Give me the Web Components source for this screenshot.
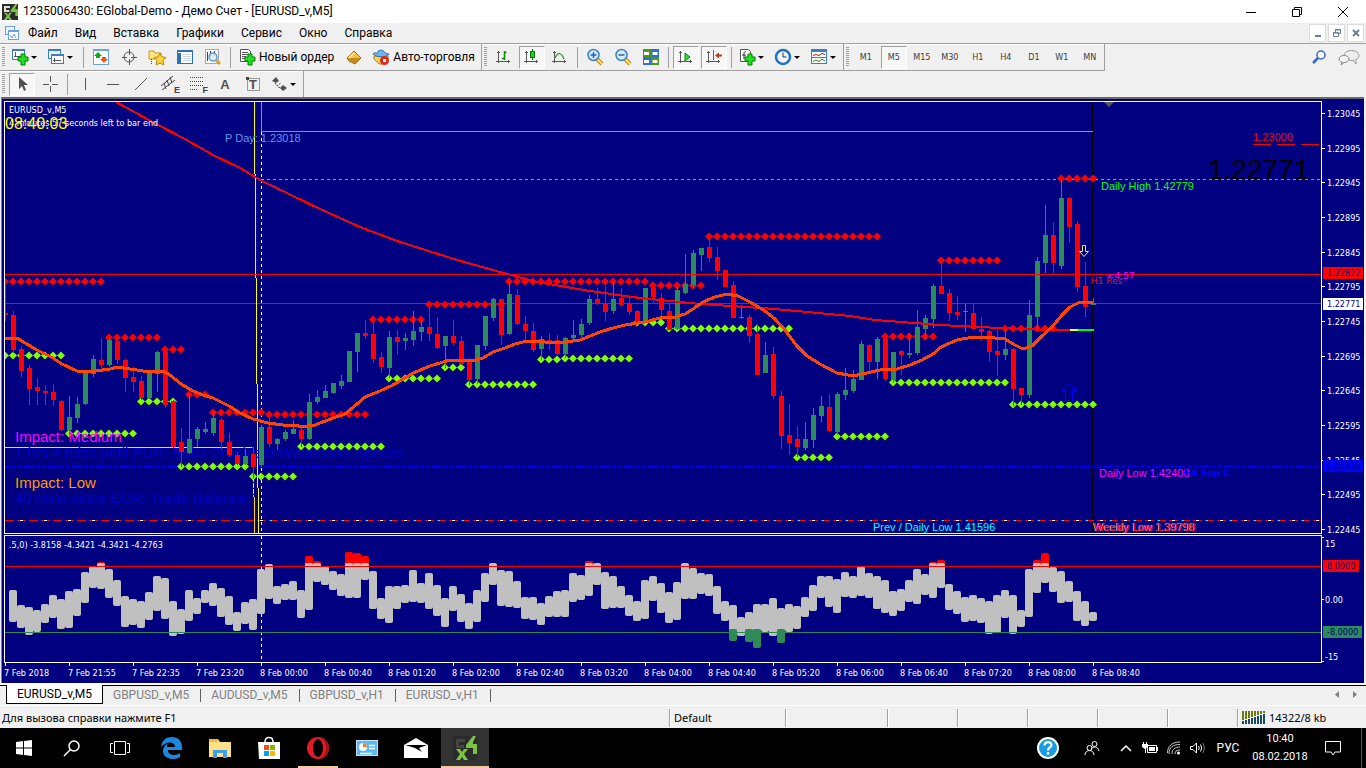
<!DOCTYPE html>
<html lang="ru">
<head>
<meta charset="utf-8">
<title>1235006430: EGlobal-Demo - Демо Счет - [EURUSD_v,M5]</title>
<style>
  html, body { margin: 0; height: 100%; }
  body { font-family: Roboto, "Noto Sans", sans-serif; font-size: 12px; color: #000; background: #f0f0f0; overflow: hidden; }
</style>
</head>
<body>
<trade-terminal></trade-terminal>

<script>
/* ---------- shared helpers ---------- */
const BUTTON_RESET = `
  :host, *, *::before, *::after { box-sizing: border-box; }
  button { appearance: none; border: 0; margin: 0; padding: 0; background: none; font: inherit; color: inherit; }
  svg { display: block; flex: none; }
`;
const define = (name, render) => customElements.define(name, class extends HTMLElement {
  connectedCallback() {
    if (this.shadowRoot) return;
    this.attachShadow({ mode: 'open' }).innerHTML = render(this);
  }
});
const svg = (w, h, body, extra = '') => `<svg width="${w}" height="${h}" viewBox="0 0 ${w} ${h}" aria-hidden="true" ${extra}>${body}</svg>`;

/* ---------- toolbar icons, 18x18 ---------- */
const AXES = '<path d="M3.5 3v12M1 13.5h14M2 4.5h3M13.500 12v3" stroke="#555" fill="none"/>';
const PLUS = '<path d="M10 6h4v3h3v4h-3v4h-4v-4H7V9h3z" fill="#1ee01e" stroke="#0a7a0a"/>';
const LENS = '<path d="M11 11l5 5" stroke="#b8860b" stroke-width="4"/><path d="M11 11l5 5" stroke="#ffe27a" stroke-width="2"/><circle cx="7.500" cy="7" r="5.500" fill="#d4ebff" stroke="#3a7fc4" stroke-width="1.500"/>';
const ICONS = {
  newchart: '<rect x="1.500" y="1.500" width="12" height="10" fill="#fff" stroke="#3a7fc4"/><path d="M1 2h13" stroke="#3a7fc4" stroke-width="2"/><path d="M4.500 4v5M3 8.500h7" stroke="#557" fill="none"/>' + PLUS,
  profiles: '<rect x="1.500" y="1.500" width="12" height="9" fill="#e8f2ff" stroke="#3a7fc4"/><path d="M1 2h13" stroke="#3a7fc4" stroke-width="2"/><rect x="4.500" y="6.500" width="12" height="9" fill="#fff" stroke="#3a7fc4"/><path d="M4 7h13" stroke="#3a7fc4" stroke-width="2"/><path d="M6 12.500h8M7.500 10v4" stroke="#557"/>',
  market: '<rect x="1.500" y="1.500" width="15" height="15" fill="#fff" stroke="#6ba5dc"/><path d="M1 2h16" stroke="#6ba5dc" stroke-width="2"/><path d="M6 4l4 4H8v2H4V8H2z" fill="#17a817"/><path d="M12 15l-4-4h2V9h4v2h2z" fill="#e8561a"/>',
  cross: '<circle cx="9" cy="9" r="5" fill="none" stroke="#555"/><path d="M9.500 1v6M9.500 11v6M2 9.500h5M11 9.500h6" stroke="#555"/>',
  folderstar: '<path d="M1 3h5l1 2h6v6H1z" fill="#ffe680" stroke="#c89b1a"/><path d="M3.500 11v5" stroke="#555" stroke-dasharray="1 1"/><path d="M12 5l2 4 4 .5-3 3 1 4.500-4-2-4 2 1-4.500-3-3L10 9z" fill="#ffd633" stroke="#b8860b"/>',
  navigator: '<rect x="1.500" y="2.500" width="15" height="13" fill="#fff" stroke="#2f6fb8"/><path d="M1 3h16" stroke="#2f6fb8" stroke-width="2"/><path d="M3.500 5v10" stroke="#2f6fb8" stroke-width="3"/><path d="M7 6.500h8M7 8.500h8M7 10.500h8M7 12.500h8" stroke="#c8d8ea"/>',
  tester: '<rect x="1.500" y="1.500" width="13" height="14" fill="#fff" stroke="#aaa"/><path d="M3.500 4v9M6.500 3v6M10.500 3v5" stroke="#444"/><path d="M12 12l4 4" stroke="#d9a520" stroke-width="3"/><circle cx="9" cy="9" r="4" fill="#cfe8ffcc" stroke="#5a9bd5" stroke-width="1.500"/>',
  order: '<path d="M2.500 1.500h8l2 2v10h-10z" fill="#fff" stroke="#555"/><path d="M4 4.500h6M4 6.500h7M4 8.500h4M4 10.500h3" stroke="#555"/>' + PLUS,
  book: '<path d="M2 10L9 3l7 7-6 6z" fill="#f3c14a" stroke="#a86f10"/><path d="M2 10l2 3 6 3 6-6" fill="#c78a1d" stroke="#a86f10"/><path d="M4 10l5-5" stroke="#ffe9a8" stroke-width="2"/>',
  auto: '<path d="M2 8h14v4l-4 4H7l-5-5z" fill="#ffd34d" stroke="#b8860b"/><path d="M5 6c0-5 7-5 8-1l4 1c0 3-14 4-16 0 1-2 3-1 4 0z" fill="#6db6ee" stroke="#3078b0"/><circle cx="12.500" cy="12.500" r="4.500" fill="#e02a1f"/><rect x="11" y="11" width="3" height="3" fill="#fff"/>',
  bars: AXES + '<path d="M9.500 3v9M9.500 4.500h2M7 10.500h2" stroke="#0a8a0a" stroke-width="1.500" fill="none"/>',
  candles: AXES + '<path d="M9.500 1v11" stroke="#0a7a0a"/><rect x="7.500" y="3.500" width="4" height="6" fill="#1fd01f" stroke="#0a7a0a"/>',
  line: AXES + '<path d="M4 10c3-6 6-6 9 1" stroke="#4a9a4a" stroke-width="1.500" fill="none"/>',
  zoomin: LENS + '<path d="M4.500 7h6M7.500 4v6" stroke="#1f66b0" stroke-width="1.500"/>',
  zoomout: LENS + '<path d="M4.500 7h6" stroke="#1f66b0" stroke-width="1.500"/>',
  tiles: '<rect x="1" y="1" width="8" height="8" fill="#4c9a1c"/><rect x="9" y="1" width="8" height="8" fill="#2f6fd0"/><rect x="1" y="9" width="8" height="8" fill="#2f6fd0"/><rect x="9" y="9" width="8" height="8" fill="#4c9a1c"/><path d="M2 5.500h5M10.500 5.500h5M2 13.500h5M10.500 13.500h5" stroke="#fff" stroke-width="3"/>',
  shift: AXES + '<path d="M8 5l5 4-5 4z" fill="#36d836" stroke="#0a8a0a"/>',
  scroll: AXES + '<path d="M8.500 2v10" stroke="#2a6db0"/><path d="M10 7.500l4-3v2h3v2h-3v2z" fill="#c0391b"/>',
  indicators: '<path d="M2.500 1.500h8l2 2v10h-10z" fill="#fff" stroke="#555"/><path d="M8 4c-2-1-2 1-2 3v4M4 7h4" stroke="#333" fill="none"/>' + PLUS,
  clock: '<circle cx="9" cy="9" r="7" fill="#eef6ff" stroke="#2470c0" stroke-width="2.500"/><path d="M9 4.500V9h3.500" stroke="#334" fill="none"/>',
  template: '<rect x="1.500" y="1.500" width="15" height="14" fill="#fff" stroke="#3a7fc4"/><path d="M1 9.500h16" stroke="#3a7fc4"/><path d="M1 2.500h16" stroke="#3a7fc4" stroke-width="3"/><path d="M3 7.500l3-1 3 1 3-2 3 1" stroke="#8a2a1a" fill="none"/><path d="M3 13.500l3-1.500 3 1.500 3-2.500 3 2" stroke="#2a8a2a" fill="none"/>',
  cursor: '<path d="M6 2v12l3-3 2 5 2-1-2-5h4z" fill="#505050"/>',
  crosshair: '<path d="M9.500 1v6M9.500 11v6M2 9.500h6M11 9.500h6" stroke="#555"/>',
  vline: '<path d="M9.500 3v12" stroke="#555"/>',
  hline: '<path d="M3 9.500h12" stroke="#555"/>',
  trend: '<path d="M3 15L15 3" stroke="#555"/>',
  channel: '<path d="M1 11L13 1M2 15L15 5M4 8l2 6M7 5l2 6M10 2l2 6" stroke="#444"/>',
  fibo: '<path d="M2 2.500h14M2 6.500h14M2 10.500h14M2 14.500h8" stroke="#444" stroke-dasharray="1 1"/>',
  label: '<rect x="3.500" y="3.500" width="12" height="12" fill="none" stroke="#444" stroke-dasharray="1 1"/><rect x="2" y="2" width="3" height="3" fill="#444"/>',
  arrows: '<path d="M2 6l4-4 3 4-3 2zM10 13l3 3 4-3-4-3z" fill="#505050"/><path d="M5 8l2 3 4-3M8 12l3 1" fill="none" stroke="#505050" stroke-dasharray="2 1"/>',
  find: '<circle cx="11" cy="6" r="4" fill="#fff" stroke="#3465d6" stroke-width="1.500"/><path d="M8 9l-5 5" stroke="#3465d6" stroke-width="2.500"/>',
  chat: '<ellipse cx="13.500" cy="6.500" rx="7.500" ry="5" fill="#eee" stroke="#999"/><path d="M15 11l3 4v-5" fill="#eee" stroke="#999"/><ellipse cx="6" cy="10" rx="5" ry="3.500" fill="#f6f6f6" stroke="#888"/><path d="M4 13l-1 3 3-2.500" fill="#f6f6f6" stroke="#888"/>'
};
const icon = (name, w = 18) => svg(w, 18, ICONS[name]);

const APP_LOGO = (s) => `<svg width="${s}" height="${s}" viewBox="0 0 24 24" aria-hidden="true"><rect width="24" height="24" fill="#2b2b2b"/><path d="M3 3h9v3H6v3h5v3H3z" fill="var(--logo-f,#444)"/><path d="M20 0l-7 9v3h7v6h4V8h-4V6l3-6z" fill="#7cc242"/><path d="M3 13h4l2 3 2-3h4l-4 5 4 6h-4l-2-3-2 3H3l4-6z" fill="#7cc242"/></svg>`;

/* ---------- title bar ---------- */
define('title-bar', () => `<style>${BUTTON_RESET}
  :host { display: flex; align-items: center; height: 23px; background: #fff; padding-left: 2px; gap: 4px; --logo-f: #ddd; }
  h1 { margin: 0; font-size: 12px; font-weight: 400; line-height: 23px; flex: 1; white-space: nowrap; padding-left: 1px; }
  .win { display: flex; }
  button { width: 46px; height: 21px; display: grid; place-items: center; }
</style>
${APP_LOGO(16)}<h1><slot></slot></h1>
<div class="win">
  <button aria-label="Свернуть">${svg(12, 12, '<path d="M1 6.500h10" stroke="#000"/>')}</button>
  <button aria-label="Развернуть">${svg(12, 12, '<path d="M1.500 3.500h7v7h-7zM3.500 3.500v-2h7v7h-2" stroke="#000" fill="none"/>')}</button>
  <button aria-label="Закрыть">${svg(12, 12, '<path d="M1 1l10 10M11 1L1 11" stroke="#000"/>')}</button>
</div>`);

/* ---------- menu bar ---------- */
define('menu-bar', () => `<style>${BUTTON_RESET}
  :host { display: flex; align-items: center; height: 21px; background: #f0f0f0; border-bottom: 1px solid #a0a0a0; padding: 0 2px 0 5px; }
  nav { display: flex; flex: 1; gap: 17px; padding-left: 9px; }
  nav button { line-height: 20px; }
  .mdi { display: flex; gap: 2px; }
  .mdi button { width: 17px; height: 18px; background: #fff; border: 1px solid #dcdcdc; display: grid; place-items: center; }
</style>
${svg(14, 14, '<rect x=".5" y=".5" width="9" height="8" fill="#eaf3ff" stroke="#6aa0e0"/><rect x="3.500" y="4.500" width="10" height="9" fill="#fff" stroke="#6aa0e0"/><path d="M3 5h11" stroke="#6aa0e0" stroke-width="2"/><path d="M5 9l2 3 2-4 2 4" stroke="#6aa0e0" fill="none"/>')}
<nav>${['Файл', 'Вид', 'Вставка', 'Графики', 'Сервис', 'Окно', 'Справка'].map(t => `<button>${t}</button>`).join('')}</nav>
<div class="mdi">
  <button aria-label="Свернуть окно">${svg(10, 10, '<path d="M2 8h6" stroke="#6b7f93" stroke-width="2"/>')}</button>
  <button aria-label="Восстановить окно">${svg(10, 10, '<path d="M1.500 4.500h5v4h-5zM3.500 4V1.500h5v4H7" stroke="#6b7f93" fill="none"/><path d="M1 5h6M3 2h6" stroke="#6b7f93"/>')}</button>
  <button aria-label="Закрыть окно">${svg(10, 10, '<path d="M2 2l6 6M8 2L2 8" stroke="#6b7f93" stroke-width="2"/>')}</button>
</div>`);

/* ---------- toolbar pieces ---------- */
define('tool-bar', () => `<style>
  :host { box-sizing: border-box; display: flex; align-items: center; height: 27px; border-right: 1px solid #a0a0a0; border-bottom: 1px solid #a0a0a0; box-shadow: inset 0 1px #fff; }
  :host([flat]) { border-bottom: 0; }
  .grip { width: 3px; height: 20px; margin: 0 3px 0 2px; background: repeating-linear-gradient(#a0a0a0 0 1px, #f0f0f0 1px 2px); }
</style><div class="grip"></div><slot></slot>`);

define('tool-sep', () => `<style>
  :host { display: block; width: 1px; height: 21px; background: #a0a0a0; margin: 0 3px; }
</style>`);

define('tool-button', el => {
  const name = el.getAttribute('icon'), text = el.getAttribute('text') || '', glyph = el.getAttribute('glyph') || '';
  return `<style>${BUTTON_RESET}
  :host { display: block; width: 28px; }
  :host([menu]) { width: 36px; }
  :host([text]) { width: auto; }
  button { display: flex; align-items: center; justify-content: center; width: 100%; height: 23px; position: relative; white-space: nowrap; }
  :host([menu]) button { justify-content: flex-start; padding-left: 3px; gap: 2px; }
  :host([text]) button { padding: 0 6px 0 4px; gap: 3px; }
  :host([pressed]) button { width: 26px; margin: 0 1px; border: 1px solid; border-color: #a0a0a0 #fff #fff #a0a0a0; background: #f7f7f7; }
  .tf { font: 9px "DejaVu Sans Condensed", "DejaVu Sans", sans-serif; color: #3c3c3c; }
  .glyph { position: absolute; font: bold 9px "Liberation Sans", sans-serif; color: #444; right: 3px; bottom: 1px; line-height: 9px; }
  .glyph.big { inset: 0; line-height: 23px; font-size: 13px; text-align: center; color: #505050; }
</style>
<button aria-label="${el.getAttribute('label') || text}">
  ${name ? icon(name) : ''}${text ? `<span>${text}</span>` : ''}${el.hasAttribute('tf') ? `<span class="tf">${el.getAttribute('tf')}</span>` : ''}
  ${glyph ? `<span class="glyph ${el.hasAttribute('big') ? 'big' : ''}">${glyph}</span>` : ''}
  ${el.hasAttribute('menu') ? svg(6, 3, '<path d="M0 0h6L3 3z" fill="#000"/>') : ''}
</button>`;
});

define('tool-area', () => `<style>${BUTTON_RESET}
  :host { display: block; background: #f0f0f0; }
  .row { display: flex; height: 27px; }
  .row + .row { height: 26px; }
  .row + .row tool-bar { height: 26px; }
  .tools { margin-left: auto; display: flex; align-items: center; gap: 10px; padding-right: 6px; }
</style>
<div class="row">
  <tool-bar>
    <tool-button menu icon="newchart" label="Новый график"></tool-button>
    <tool-button menu icon="profiles" label="Профили"></tool-button>
    <tool-sep></tool-sep>
    <tool-button icon="market" label="Обзор рынка"></tool-button>
    <tool-button icon="cross" label="Окно данных"></tool-button>
    <tool-button icon="folderstar" label="Навигатор"></tool-button>
    <tool-button icon="navigator" label="Терминал"></tool-button>
    <tool-button icon="tester" label="Тестер стратегий"></tool-button>
    <tool-sep></tool-sep>
    <tool-button icon="order" text="Новый ордер"></tool-button>
    <tool-button icon="book" label="MetaEditor"></tool-button>
    <tool-button icon="auto" text="Авто-торговля"></tool-button>
  </tool-bar>
  <tool-bar>
    <tool-button icon="bars" label="Бары"></tool-button>
    <tool-button icon="candles" pressed label="Свечи"></tool-button>
    <tool-button icon="line" label="Линия"></tool-button>
    <tool-sep></tool-sep>
    <tool-button icon="zoomin" label="Увеличить"></tool-button>
    <tool-button icon="zoomout" label="Уменьшить"></tool-button>
    <tool-button icon="tiles" label="Окна мозаикой"></tool-button>
    <tool-sep></tool-sep>
    <tool-button icon="shift" pressed label="Автопрокрутка"></tool-button>
    <tool-button icon="scroll" pressed label="Сдвиг графика"></tool-button>
    <tool-sep></tool-sep>
    <tool-button menu icon="indicators" label="Индикаторы"></tool-button>
    <tool-button menu icon="clock" label="Периоды"></tool-button>
    <tool-button menu icon="template" label="Шаблоны"></tool-button>
  </tool-bar>
  <tool-bar>
    ${['M1', 'M5', 'M15', 'M30', 'H1', 'H4', 'D1', 'W1', 'MN'].map(t => `<tool-button tf="${t}" label="${t}" ${t === 'M5' ? 'pressed' : ''}></tool-button>`).join('')}
  </tool-bar>
  <div class="tools">
    <button aria-label="Поиск">${icon('find')}</button>
    <button aria-label="Чат">${icon('chat', 22)}</button>
  </div>
</div>
<div class="row">
  <tool-bar flat>
    <tool-button icon="cursor" pressed label="Курсор"></tool-button>
    <tool-button icon="crosshair" label="Перекрестие"></tool-button>
    <tool-sep></tool-sep>
    <tool-button icon="vline" label="Вертикальная линия"></tool-button>
    <tool-button icon="hline" label="Горизонтальная линия"></tool-button>
    <tool-button icon="trend" label="Трендовая линия"></tool-button>
    <tool-button icon="channel" glyph="E" label="Канал"></tool-button>
    <tool-button icon="fibo" glyph="F" label="Фибоначчи"></tool-button>
    <tool-button glyph="A" big label="Текст"></tool-button>
    <tool-button icon="label" glyph="T" big label="Метка"></tool-button>
    <tool-button menu icon="arrows" label="Стрелки"></tool-button>
  </tool-bar>
</div>`);

/* ---------- chart data ---------- */
/* One candle every 8px, first at x=5: direction, high, low, body top, body bottom. */
const CANDLES = `R283,321,313,315 R311,353,315,350 R346,377,349,371 R365,405,368,389 R378,405,387,391 R385,405,391,393 R384,406,392,400 R400,431,401,430 G396,435,417,430 G397,423,404,418 G370,405,373,404 G355,377,359,374 R338,368,360,365 G338,367,340,365 R338,364,341,360 R359,392,360,378 R367,392,377,382 R376,400,381,398 G371,399,372,398 G351,392,352,374 R350,408,352,405 R400,448,401,447 R428,467,442,452 G394,454,439,453 G427,447,429,439 G422,434,429,432 G411,436,418,433 R418,450,420,442 R433,457,442,455 R452,465,455,464 G449,465,456,464 R448,478,454,467 G425,467,427,465 R416,447,427,444 G438,450,439,444 G430,441,432,439 G420,434,429,434 R428,447,430,439 G394,440,402,439 G390,404,397,402 G385,398,391,398 G383,394,383,393 G375,389,381,386 G351,382,351,382 G333,372,333,352 R320,339,333,336 R319,363,334,359 R352,373,357,367 G331,378,337,368 R330,355,337,342 G333,350,338,341 G311,346,331,340 G320,341,327,332 R305,341,327,334 R317,349,334,348 G336,368,336,346 R320,346,336,343 R336,365,341,364 R358,385,360,380 G345,384,345,379 G316,350,316,346 G298,321,299,318 R299,345,299,335 G281,335,294,334 R289,325,295,324 R316,343,324,331 R323,352,331,350 G336,360,339,349 R333,350,340,342 R335,355,340,354 G337,358,338,354 G320,341,335,338 G319,337,324,335 G295,325,299,323 R288,305,299,303 R286,321,303,312 G282,314,299,311 R288,307,298,305 R297,315,304,312 R310,324,311,322 G288,323,288,322 R286,303,288,297 R293,317,298,310 R303,330,311,330 G286,330,290,329 G254,294,284,293 G250,287,253,285 G248,271,248,255 R238,262,247,258 R247,280,257,271 R270,287,270,287 R281,318,285,318 G305,319,317,318 R315,343,317,336 R324,375,334,375 G342,373,355,373 R347,399,354,396 R391,449,396,436 R404,455,435,443 R426,457,439,447 G422,450,439,448 G408,448,415,440 G396,422,406,416 R394,432,407,431 G392,435,394,432 G368,400,390,395 G370,393,379,391 G341,380,344,380 R344,373,345,362 G337,379,339,362 R336,381,339,379 G352,383,352,380 R350,375,351,355 G333,358,353,355 G310,355,327,353 G315,339,318,329 G284,328,286,319 R262,294,286,294 R289,321,293,313 R296,320,312,315 G304,332,311,312 R304,329,313,329 R317,341,329,332 R330,362,331,352 R330,376,351,355 G329,360,349,355 R348,406,349,389 R388,405,388,395 G300,398,315,395 G257,330,261,317 G205,273,235,263 R222,273,235,263 G180,269,198,266 R197,243,198,227 R221,292,224,287 R262,317,286,307 G298,305,303,305`.split(' ');

/* Fractal rows: y, first x, last x, 8px step. */
const RED_ROWS = [[281,5,101],[337,109,157],[349,165,181],[394,189,205],[412,213,261],[414,269,365],[319,373,421],[304,429,501],[281,509,645],[285,653,701],[236,709,877],[336,885,933],[260,941,997],[328,1005,1053],[178,1061,1093]];
const LIME_ROWS = [[355,5,61],[433,69,133],[401,141,173],[466,181,245],[476,253,293],[446,301,381],[378,389,437],[367,445,461],[384,469,533],[359,541,557],[358,565,629],[322,637,661],[328,669,789],[457,797,829],[436,837,885],[382,893,1005],[404,1013,1093]];

const SLOW_MA = '116,102 158,125 183,138 213,155 240,168 262,181 320,209 360,227 400,242 457,260 500,272 537,282 590,291 640,298 700,304 775,309 850,316 875,320 940,325 1000,328 1048,330 1070,330';
const FAST_MA = '5,338 17,338 25,343 37,350 53,358 62,364 77,371 88,372 110,369 117,367 130,369 150,372 163,371 170,375 181,384 193,391 203,395 213,398 229,406 240,413 253,419 268,423 283,425 295,425 302,427 315,425 333,418 345,414 357,404 365,397 380,391 391,386 400,381 413,373 430,366 450,360 475,360 483,358 493,352 505,348 515,344 527,341 545,342 565,342 580,340 590,336 600,332 613,328 625,325 645,322 660,318 675,317 685,314 693,309 703,302 715,297 727,294 738,296 750,302 765,311 775,319 785,330 797,346 807,356 820,364 837,373 853,376 867,373 880,370 897,369 910,365 922,360 933,354 941,347 957,340 973,337 985,337 1005,339 1015,345 1023,349 1032,346 1041,337 1052,327 1062,315 1070,307 1080,302 1093,302';

/* Oscillator: top, bottom of each column from x=13; r = overbought cap top, g = oversold foot bottom. */
const OSC = `590,622 605,628 607,635 610,632 604,623 595,618 599,629 591,628 589,616 572,603 566,588 563,589,r562 569,598 580,606 596,627 599,625 601,628 592,620 576,611 578,619 601,636 609,634 590,621 598,614 590,603 583,606 588,617 596,625 612,631 602,624 599,630 569,614 564,599 586,604 584,600 581,600 590,618 563,610,r556 563,582,r561 566,585 571,590 574,596 563,598,r552 563,598,r553 563,580,r556 571,609 598,619 586,623 586,609 585,603 570,602 583,603 573,609 585,616 598,627 586,611 594,622 603,629 590,622 573,602 563,585 570,606 571,607 581,608 597,619 597,620 603,625 596,617 591,617 590,617 573,602 575,600 563,596,r561 563,585 572,609 576,608 586,608 595,616 601,621 580,619 576,601 583,613 592,623 582,620 563,599 568,599 573,594 574,596 586,614 601,621 605,631,g641 617,636 612,631,g642 604,631,g648 604,632 598,636 608,631,g643 604,632 606,629 597,617 585,611 576,598 576,607 579,613 572,597 576,598 566,596 573,598 576,609 580,613 591,616 589,611 580,602 569,604 574,595 563,598,r562 563,588,r560 584,610 591,614 597,622 595,621 598,623 601,634 595,633 590,618 595,634 610,627 569,617 563,593,r560 563,583,r553 567,592 571,603 581,602 591,621 601,626 612,621`.split(' ');

const rect = (x, y, w, h, f) => `<rect x="${x}" y="${y}" width="${w}" height="${h}" fill="${f}"/>`;
const dash = (x1, y1, x2, y2, c, d) => `<path d="M${x1} ${y1}L${x2} ${y2}" stroke="${c}" stroke-dasharray="${d}" fill="none"/>`;
const text = (x, y, cls, fill, s) => `<text x="${x}" y="${y}" class="${cls}" fill="${fill}">${s.replace('<', '&lt;')}</text>`;
const WIDE = 4000;

const candles = CANDLES.map((c, n) => {
  const [h, l, t, b] = c.slice(1).split(',').map(Number), x = 5 + 8 * n, f = c[0] === 'R' ? '#f00' : '#2e8b57';
  return rect(x, h, 1, l - h, f) + rect(x - 2, t, 5, Math.max(b - t, 1), f);
}).join('');
const diamonds = (rows, fill) => rows.map(([y, a, b]) => {
  let s = '';
  for (let x = a; x <= b; x += 8) s += `M${x - 4} ${y + .5}l4 -4 4 4 -4 4z`;
  return `<path d="${s}" fill="${fill}"/>`;
}).join('');
const osc = OSC.map((o, n) => {
  const [t, b, m] = o.split(','), x = 9 + 8 * n;
  const col = (y1, y2, f) => `<rect x="${x}" y="${y1}" width="8" height="${y2 - y1}" rx="2" fill="${f}"/>`;
  let s = '';
  if (m && m[0] === 'r') s += col(+m.slice(1), 575, '#f00');
  s += col(+t, +b, '#c0c0c0');
  if (m && m[0] === 'g') s += col(629, +m.slice(1), '#2e8b57');
  return s;
}).join('');

define('chart-pane', el => {
  const main = el.getAttribute('kind') === 'price';
  const body = main ? `
    ${rect(0, 303, WIDE, 1, '#484858')}${rect(1092, 90, 1, 900, '#000')}
    ${dash(0, 466.5, WIDE, 466.5, '#00f', '9 3 3 3 3 3')}
    ${dash(5, 520.5, WIDE, 520.5, '#f00', '9 3')}${dash(20, 520.5, WIDE, 520.5, '#fff', '3 21')}${dash(270, 520.5, WIDE, 520.5, '#0ff', '2 22')}
    ${dash(261, 179.5, WIDE, 179.5, '#0f0', '3 3')}
    ${rect(261, 90, 1, 42, '#6495ed')}${rect(261, 131, 832, 1, '#6495ed')}
    ${dash(261.5, 132, 261.5, 900, '#fff', '3 3')}
    ${rect(5, 447, 249, 1, '#ffe23c')}${dash(253.5, 447, 253.5, 497, '#ffe23c', '5 1')}${rect(254, 497, 1, 400, '#ffd700')}
    ${rect(254, 90, 1, 84, '#ff0')}${rect(255, 174, 1, 104, '#ff0')}${rect(256, 278, 1, 106, '#ff0')}${rect(257, 384, 1, 104, '#ff0')}${rect(258, 488, 1, 400, '#ff0')}
    ${text(15, 458, 'news', '#0000c0', '1 hrs 4 mins until EUR: Buba President Weidmann Speaks')}
    ${text(15, 503, 'news', '#0000c0', '40 mins since EUR: Trade Balance')}
    ${diamonds(RED_ROWS, '#f00')}${diamonds(LIME_ROWS, '#7fff00')}
    ${candles}
    ${rect(0, 274, WIDE, 1, '#f00')}
    <polyline points="${SLOW_MA}" fill="none" stroke="#f00" stroke-width="2"/>
    ${rect(1070, 329, 8, 2, '#ff0')}${rect(1078, 329, 16, 2, '#0f0')}
    <polyline points="${FAST_MA}" fill="none" stroke="#ff4500" stroke-width="3"/>
    <path d="M1104 102h10l-5 5z" fill="#585858"/>
    <path d="M1082.500 245.500h3v6h3l-4.500 5-4.500-5h3z" fill="none" stroke="#f0e68c"/>
    <path d="M1065.500 401.500v-11h-4l7.500-7 7.500 7h-4v11z" fill="none" stroke="#00f"/>
    ${dash(1253, 144.5, 1319, 144.5, '#f00', '18 6')}
    ${text(1253, 141, 'lab', '#f00', '1.23000')}
    ${text(1208, 179, 'big', '#000', '1.22771')}
    ${text(225, 142, 'lab', '#6495ed', 'P Day: 1.23018')}
    ${text(1101, 190, 'lab', '#0f0', 'Daily High 1.42779')}
    ${text(1107, 279, 'ver', '#f0f', '<4:57')}
    ${text(1091, 284, 'ver', '#dc143c', 'H1 Res')}
    ${text(1099, 477, 'lab', '#f0f', 'Daily Low 1.42408')}
    ${text(1184, 476, 'verB', '#00f', 'H4 Sup C')}
    ${text(873, 531, 'lab', '#0ff', 'Prev / Daily Low 1.41596')}
    ${text(1093, 531, 'lab', '#ffc0cb', 'Weekly Low 1.39798')}
    ${text(1094, 531, 'lab', '#f00', 'Weekly Low 1.39798')}
    ${text(15, 442, 'news', '#f0f', 'Impact: Medium')}
    ${text(15, 488, 'news', '#f90', 'Impact: Low')}
    ${text(9, 113, 'tah', '#fff', 'EURUSD_v,M5')}
    ${text(9, 126, 'tah', '#fff', '4 minutes 57 seconds left to bar end')}
    ${text(5, 129, 'clk', '#ff0', '08:40:03')}`
  : `${dash(261.5, 536, 261.5, 900, '#fff', '3 3')}${osc}
    ${rect(0, 566, WIDE, 1, '#f00')}${rect(0, 632, WIDE, 1, '#2e8b57')}
    ${text(9, 548, 'tah', '#fff', '.5,0) -3.8158 -4.3421 -4.3421 -4.2763')}`;
  return `<style>
  :host { display: block; min-height: 0; min-width: 0; border: 1px solid #fff; overflow: hidden; }
  svg { display: block; width: 100%; height: 100%; }
  polyline { shape-rendering: crispEdges; }
  text { white-space: pre; }
  .tah { font: 9px "DejaVu Sans Condensed", "DejaVu Sans", sans-serif; }
  .lab { font: 11px "Liberation Sans", sans-serif; }
  .news { font: 15px "Liberation Sans", sans-serif; }
  .clk { font: 16px "Liberation Sans", sans-serif; }
  .big { font: 28px "Liberation Sans", sans-serif; }
  .ver { font: 9px "DejaVu Sans", sans-serif; }
  .verB { font: bold 9px "DejaVu Sans", sans-serif; }
</style><svg role="img" aria-label="${main ? 'EURUSD_v,M5' : 'Oscillator'}"><g transform="translate(-5 ${main ? -102 : -536})">${body}</g></svg>`;
});

define('chart-scale', el => {
  const main = el.getAttribute('kind') === 'price';
  const label = (y, s) => rect(0, y, 3, 1, '#fff') + text(5, y + 4, 't', '#fff', s);
  const badge = (y, s, bg, fg, w = 40) => rect(1, y - 6, w, 12, bg) + text(5, y + 3, 't', fg, s);
  let body = '';
  if (main) {
    const prices = ['1.23045', '1.22995', '1.22945', '1.22895', '1.22845', '1.22795', '1.22745', '1.22695', '1.22645', '1.22595', '1.22545', '1.22495', '1.22445'];
    const ys = [113, 148, 182, 217, 252, 286, 321, 356, 390, 425, 460, 494, 529];
    body = prices.map((p, i) => label(ys[i], p)).join('') + badge(273, '1.22812', '#f00', '#000080') + badge(304, '1.22771', '#fff', '#000080') + badge(466, '1.22536', '#00f', '#000080');
  } else {
    body = rect(0, 537, 2, 1, '#fff') + text(3, 547, 't', '#fff', '15') + rect(0, 599, 2, 1, '#fff') + text(3, 603, 't', '#fff', '0.00') + rect(0, 661, 2, 1, '#fff') + text(3, 660, 't', '#fff', '-15')
      + badge(566, '8.0000', '#f00', '#000080', 36) + badge(632, '-8.0000', '#2e8b57', '#000080', 39);
  }
  return `<style>
  :host { display: block; min-height: 0; overflow: hidden; }
  svg { display: block; width: 100%; height: 100%; }
  .t { font: 9px "DejaVu Sans Condensed", "DejaVu Sans", sans-serif; }
</style><svg><g transform="translate(0 ${main ? -101 : -535})">${body}</g></svg>`;
});

define('time-scale', () => `<style>
  :host { display: flex; overflow: hidden; color: #fff; font: 9px "DejaVu Sans Condensed", "DejaVu Sans", sans-serif; }
  span { flex: none; width: 64px; white-space: nowrap; line-height: 14px; }
  span::before { content: ""; display: block; width: 1px; height: 3px; margin-left: 1px; background: #fff; }
</style>${['7 Feb 2018', '7 Feb 21:55', '7 Feb 22:35', '7 Feb 23:20', '8 Feb 00:00', '8 Feb 00:40', '8 Feb 01:20', '8 Feb 02:00', '8 Feb 02:40', '8 Feb 03:20', '8 Feb 04:00', '8 Feb 04:40', '8 Feb 05:20', '8 Feb 06:00', '8 Feb 06:40', '8 Feb 07:20', '8 Feb 08:00', '8 Feb 08:40'].map(t => `<span>${t}</span>`).join('')}`);

define('price-chart', () => `<style>
  :host { box-sizing: border-box; display: flex; min-height: 0; padding: 0 2px 0 1px; background: #f0f0f0; border-bottom: 2px solid #fff; }
  .frame { flex: 1; min-width: 0; display: grid; grid-template-columns: minmax(0, 1fr) 42px; grid-template-rows: minmax(0, 433fr) minmax(0, 128fr) 19px;
    row-gap: 1px; background: #000080; border-top: 2px solid #696969; border-left: 1px solid #808080; padding: 2px 0 0 2px; }
  time-scale { grid-column: 1 / 3; margin-top: -1px; }
</style>
<div class="frame">
  <chart-pane kind="price"></chart-pane><chart-scale kind="price"></chart-scale>
  <chart-pane kind="osc"></chart-pane><chart-scale kind="osc"></chart-scale>
  <time-scale></time-scale>
</div>`);

/* ---------- chart tabs ---------- */
define('chart-tabs', () => `<style>${BUTTON_RESET}
  :host { display: flex; align-items: flex-start; height: 20px; background: #f0f0f0; border-top: 1px solid #000; padding-left: 6px; color: #808080; }
  button { height: 18px; padding: 0 12px 0 10px; position: relative; white-space: nowrap; }
  button + button::after { content: ""; position: absolute; right: 0; top: 3px; width: 1px; height: 13px; background: #606060; }
  .on { background: #fff; color: #000; border: solid #000; border-width: 0 1px 1px; margin-top: -1px; height: 19px; padding: 0 10px; }
  .arrows { margin-left: auto; display: flex; gap: 14px; padding: 5px 9px 0 0; }
</style>
<button class="on">EURUSD_v,M5</button><button>GBPUSD_v,M5</button><button>AUDUSD_v,M5</button><button>GBPUSD_v,H1</button><button>EURUSD_v,H1</button>
<div class="arrows">${svg(4, 7, '<path d="M4 0v7L0 3.500z" fill="#808080"/>')}${svg(4, 7, '<path d="M0 0v7l4-3.500z" fill="#808080"/>')}</div>`);

/* ---------- status bar ---------- */
define('status-bar', () => {
  let bars = '';
  for (let i = 0; i < 8; i++) bars += rect(i * 3, 0, 2, 9 - i, '#6b7d0f') + rect(i * 3, 10 - i, 2, 3 + i, '#174a63');
  return `<style>
  :host, *, *::before, *::after { box-sizing: border-box; }
  :host { display: flex; height: 23px; background: #f0f0f0; border-top: 1px solid #fff; font: 11px/22px "Noto Sans", sans-serif; white-space: nowrap; }
  div { flex: none; padding: 1px 0 0 5px; position: relative; display: flex; align-items: center; }
  div + div::before { content: ""; position: absolute; left: 0; top: 3px; width: 2px; height: 18px; background: linear-gradient(90deg, #a0a0a0 50%, #fff 50%); }
  .hint { flex: 1; padding-left: 2px; }
  .p { width: 70px; } .profile { width: 116px; } .symbol { width: 102px; } .net { width: 129px; gap: 4px; }
</style>
<div class="hint">Для вызова справки нажмите F1</div><div class="profile">Default</div><div class="symbol"></div><div class="p"></div><div class="p"></div><div class="p"></div><div class="p"></div><div class="p"></div><div class="net">${svg(23, 13, bars)}14322/8 kb</div>`;
});

/* ---------- Windows taskbar ---------- */
const APPS = [
  ['Проводник', svg(22, 20, '<path d="M0 1h9l2 3h11v15H0z" fill="#ffe08a"/><path d="M0 1h9v3H0z" fill="#f0b93a"/><path d="M4 20v-8h14v8h-4v-5H8v5z" fill="#3ba0e6"/>')],
  ['Магазин', svg(24, 24, '<path d="M8 6c0-6 8-6 8 0" fill="none" stroke="#fff" stroke-width="1.500"/><path d="M1 6h22v17H2z" fill="#fff"/><path d="M7 9h5v5H7z" fill="#f25022"/><path d="M13 9h5v5h-5z" fill="#7fba00"/><path d="M7 15h5v5H7z" fill="#00a4ef"/><path d="M13 15h5v5h-5z" fill="#ffb900"/>')],
  ['Opera', svg(24, 24, '<ellipse cx="12" cy="12" rx="11" ry="11" fill="#e01b24"/><path d="M12 1a11 11 0 0 1 0 22c5-1 8-5 8-11S17 2 12 1z" fill="#a3101a"/><ellipse cx="12" cy="12" rx="5" ry="9" fill="#000"/>'), 'run'],
  ['Панель управления', svg(22, 16, '<rect x=".5" y=".5" width="21" height="15" fill="#5bb8f0" stroke="#bfe4fb"/><circle cx="7" cy="7" r="4" fill="#fff"/><path d="M7 7V3a4 4 0 0 1 4 4z" fill="#f58220"/><path d="M13 5.500h6M13 8.500h6M4 13.500h12" stroke="#fff" stroke-width="1.500"/>')],
  ['Почта', svg(24, 20, '<path d="M0 7L12 0l12 7v13H0z" fill="#fff"/><path d="M1 7h22l-8 3 3 4-7-4z" fill="#000"/>')],
  ['MetaTrader 4', APP_LOGO(24), 'active']
];
define('task-bar', () => `<style>${BUTTON_RESET}
  :host { display: flex; height: 40px; background: #000; color: #fff; }
  button { flex: none; width: 48px; height: 40px; display: grid; place-items: center; }
  .apps { display: flex; gap: 1px; margin-left: 3px; }
  .apps button.run { background: linear-gradient(#f4c9a2, #f4c9a2) center bottom / 40px 2px no-repeat; }
  .apps button.active { background: linear-gradient(#f4c9a2, #f4c9a2) center bottom / 48px 2px no-repeat #333; }
  .tray { margin-left: auto; display: flex; align-items: center; font-size: 11px; }
  .tray button { width: 24px; }
  .tray .help, .tray .people { width: 44px; }
  .tray .lang { width: 36px; font-size: 12px; }
  .tray .time { width: 68px; line-height: 18px; text-align: center; }
  .tray .note { width: 38px; }
  .show { width: 5px; margin-left: 9px; height: 40px; border-left: 1px solid #555; }
</style>
<button aria-label="Пуск">${svg(16, 16, '<path d="M0 2l7-1v6.500H0zM8 1l8-1v7.500H8zM0 8.500h7V15l-7-1zM8 8.500h8V16l-8-1z" fill="#fff"/>')}</button>
<button aria-label="Поиск">${svg(18, 18, '<circle cx="11" cy="7" r="5" fill="none" stroke="#fff" stroke-width="1.500"/><path d="M7.500 10.500L1 17" stroke="#fff" stroke-width="1.500"/>')}</button>
<button aria-label="Представление задач">${svg(20, 14, '<path d="M4.500 .5h11v13h-11zM3 2.500H.5v9H3M17 2.500h2.500v9H17" fill="none" stroke="#fff"/>')}</button>
<div class="apps">
  <button aria-label="Edge">${svg(22, 22, '<path d="M1 10C2 3 6 0 12 0c6 0 10 4 10 10v3H8c0 6 8 6 12 3v4c-6 4-16 2-17-5-.5-4 2-7 6-9-2 1-2 3-2 4h8c0-6-9-6-14 0z" fill="#1e86dc"/>')}</button>
  ${APPS.map(([n, i, c]) => `<button aria-label="${n}" class="${c || ''}">${i}</button>`).join('')}
</div>
<div class="tray">
  <button class="help" aria-label="Справка">${svg(24, 24, '<circle cx="12" cy="12" r="10" fill="#1a9ae0" stroke="#fff" stroke-width="2"/><path d="M8.500 9.500c0-4.500 7-4.500 7-.5 0 2.500-3.500 2.500-3.500 5.500M12 16v2.500" fill="none" stroke="#fff" stroke-width="2.200"/>')}</button>
  <button class="people" aria-label="Люди">${svg(16, 16, '<circle cx="10.500" cy="4" r="2.500" fill="none" stroke="#fff"/><path d="M7 9c2-3 7-3 8 2" fill="none" stroke="#fff"/><circle cx="5.500" cy="8" r="2.500" fill="none" stroke="#fff"/><path d="M1 15c0-6 9-6 9 0" fill="none" stroke="#fff"/>')}</button>
  <button aria-label="Скрытые значки">${svg(12, 8, '<path d="M1 7l5-5 5 5" fill="none" stroke="#fff" stroke-width="1.500"/>')}</button>
  <button aria-label="Батарея">${svg(16, 12, '<path d="M5.500 3.500h9v7h-9z" fill="none" stroke="#fff"/><path d="M7 5h6v4H7zM15 5h1v4h-1zM0 2h6v3H5l-1 2v4H3V7L0 5zM1 0h1v2H1zM4 0h1v2H4z" fill="#fff"/>')}</button>
  <button aria-label="Сеть">${svg(14, 14, '<circle cx="11.500" cy="12" r="1.500" fill="#fff"/><path d="M8 13c0-3 2-4 5-4M5 13c0-5 3-7 8-7M2 13C2 6 6 3.500 13 3.500M.5 12C.5 5 5 1 13 1" fill="none" stroke="#ccc"/>')}</button>
  <button aria-label="Громкость">${svg(16, 12, '<path d="M.5 4.500H3L6.500 1v10L3 7.500H.5z" fill="none" stroke="#fff"/><path d="M8.500 4q1.500 2 0 4M10.500 2.500q2.500 3.500 0 7" fill="none" stroke="#fff"/><path d="M13 1q3 5 0 10" fill="none" stroke="#777"/>')}</button>
  <button class="lang">РУС</button>
  <button class="time"><span>10:40<br>08.02.2018</span></button>
  <button class="note" aria-label="Уведомления">${svg(16, 16, '<path d="M.5 1.500h15v10.500H10L8 15l-2-3H.500z" fill="none" stroke="#fff"/>')}</button>
  <div class="show"></div>
</div>`);

/* ---------- whole window ---------- */
define('trade-terminal', () => `<style>
  :host { display: flex; flex-direction: column; height: 100vh; min-height: 600px; }
  price-chart { flex: 1; }
</style>
<title-bar>1235006430: EGlobal-Demo - Демо Счет - [EURUSD_v,M5]</title-bar>
<menu-bar></menu-bar>
<tool-area></tool-area>
<price-chart></price-chart>
<chart-tabs></chart-tabs>
<status-bar></status-bar>
<task-bar></task-bar>`);
</script>
</body>
</html>
